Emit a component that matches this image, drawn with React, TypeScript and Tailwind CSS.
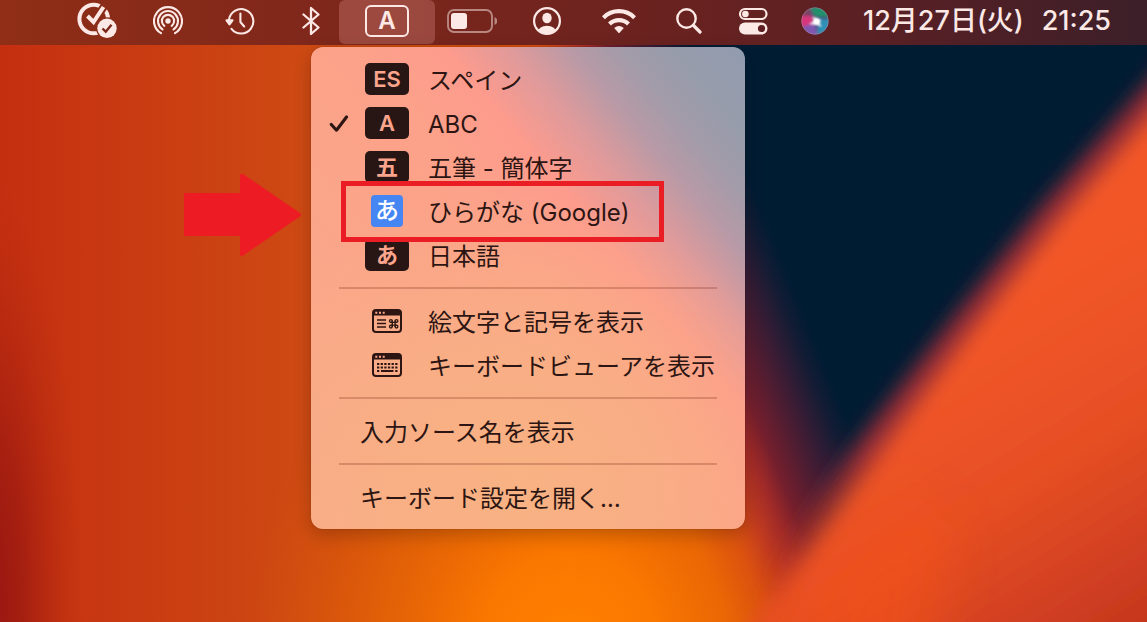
import type { ReactNode } from "react";

function Wallpaper() {
  return (
    <svg
      className="absolute inset-0 h-full w-full"
      viewBox="0 0 1147 622"
      preserveAspectRatio="none"
      aria-hidden="true"
    >
      <defs>
        <linearGradient id="base" x1="0" y1="0" x2="1" y2="0">
          <stop offset="0" stopColor="#c42f10" />
          <stop offset="0.12" stopColor="#c93b12" />
          <stop offset="0.27" stopColor="#ce4a13" />
          <stop offset="0.5" stopColor="#d65208" />
          <stop offset="0.7" stopColor="#dc5010" />
        </linearGradient>
        <radialGradient id="glow" cx="570" cy="640" r="330" gradientUnits="userSpaceOnUse">
          <stop offset="0" stopColor="#ff8000" />
          <stop offset="0.25" stopColor="#fb7800" />
          <stop offset="0.6" stopColor="#e56405" stopOpacity="0.75" />
          <stop offset="1" stopColor="#d65208" stopOpacity="0" />
        </radialGradient>
        <radialGradient
          id="shade"
          cx="0"
          cy="0"
          r="1"
          gradientUnits="userSpaceOnUse"
          gradientTransform="translate(-10 600) scale(90 420)"
        >
          <stop offset="0" stopColor="#961512" />
          <stop offset="0.4" stopColor="#a01c10" stopOpacity="0.8" />
          <stop offset="1" stopColor="#b52a10" stopOpacity="0" />
        </radialGradient>
        <linearGradient id="night" x1="640" y1="400" x2="812" y2="331" gradientUnits="userSpaceOnUse">
          <stop offset="0" stopColor="#dc5010" stopOpacity="0" />
          <stop offset="0.2" stopColor="#d64a14" stopOpacity="0.6" />
          <stop offset="0.34" stopColor="#c03a20" />
          <stop offset="0.45" stopColor="#a02a28" />
          <stop offset="0.55" stopColor="#741f2d" />
          <stop offset="0.67" stopColor="#541d31" />
          <stop offset="0.79" stopColor="#341c35" />
          <stop offset="0.91" stopColor="#121c34" />
          <stop offset="1" stopColor="#001c33" />
        </linearGradient>
        <linearGradient id="rim" x1="0" y1="460" x2="0" y2="590" gradientUnits="userSpaceOnUse">
          <stop offset="0" stopColor="#8f2a38" />
          <stop offset="1" stopColor="#d8481c" stopOpacity="0" />
        </linearGradient>
        <linearGradient id="wing" x1="960" y1="330" x2="1150" y2="640" gradientUnits="userSpaceOnUse">
          <stop offset="0" stopColor="#f25628" />
          <stop offset="0.45" stopColor="#e64f24" />
          <stop offset="1" stopColor="#c2341e" />
        </linearGradient>
        <filter id="soft" x="-30%" y="-30%" width="160%" height="160%">
          <feGaussianBlur stdDeviation="26" />
        </filter>
        <filter id="edge" x="-30%" y="-30%" width="160%" height="160%">
          <feGaussianBlur stdDeviation="10" />
        </filter>
      </defs>
      <rect width="1147" height="622" fill="url(#base)" />
      <rect width="1147" height="622" fill="url(#shade)" />
      <rect width="1147" height="622" fill="url(#glow)" />
      <rect width="1147" height="622" fill="url(#night)" />
      <path d="M1180 45 L1042 205 L947 325 L859 440 L796 532 L735 622 L700 680 L1240 700 L1240 30 Z" fill="url(#rim)" filter="url(#edge)" />
      <path d="M1202 55 L1062 215 L967 335 L880 450 L811 545 L755 622 L717 680 L1240 700 L1240 30 Z" fill="url(#wing)" filter="url(#edge)" />
      <path d="M820 590 L900 500 L950 540 L920 690 L790 690 Z" fill="#f65314" opacity="0.500" filter="url(#soft)" />
    </svg>
  );
}

function TaskCheckIcon() {
  return (
    <svg className="h-11 w-10" viewBox="77 0 40 44" fill="none" aria-hidden="true">
      <mask id="ringMask" maskUnits="userSpaceOnUse" x="70" y="0" width="50" height="44">
        <rect x="70" width="50" height="44" fill="#fff" />
        <path d="M93.500 23 L107 3" stroke="#000" strokeWidth="8" />
        <circle cx="107" cy="29.300" r="11" fill="#000" />
      </mask>
      <circle cx="93.700" cy="20" r="14.300" stroke="currentColor" strokeWidth="4" mask="url(#ringMask)" />
      <path d="M87.500 17 L93.500 23 L103.500 8" stroke="currentColor" strokeWidth="4" />
      <circle cx="107" cy="29.300" r="9.700" fill="currentColor" />
      <path d="M102.500 29.500 L105.700 32.700 L111.500 25.700" stroke="#7b2819" strokeWidth="2.400" />
    </svg>
  );
}

function AirDropIcon() {
  return (
    <svg className="size-[30px]" viewBox="-15 -15 30 30" fill="none" stroke="currentColor" strokeWidth="2.100" strokeLinecap="round" aria-hidden="true">
      <path d="M-7 12.200 A14 14 0 1 1 7 12.200" />
      <path d="M-5.500 8.400 A10 10 0 1 1 5.500 8.400" />
      <path d="M-3.700 4.800 A6.100 6.100 0 1 1 3.700 4.800" />
      <circle r="2.700" fill="currentColor" stroke="none" />
    </svg>
  );
}

function HistoryIcon() {
  return (
    <svg className="size-[30px]" viewBox="0 0 30 30" fill="none" stroke="currentColor" strokeWidth="2.100" strokeLinecap="round" strokeLinejoin="round" aria-hidden="true">
      <path d="M4 14 A12.200 12.200 0 1 1 6.500 22.800" />
      <path d="M1.500 14.300 H7.500 L4.500 18.500 Z" fill="currentColor" />
      <path d="M15.400 7.500 V16 L19.200 20.500" />
    </svg>
  );
}

function BluetoothIcon() {
  return (
    <svg className="h-[30px] w-[18px]" viewBox="0 0 18 30" fill="none" stroke="currentColor" strokeWidth="2.300" strokeLinecap="round" strokeLinejoin="round" aria-hidden="true">
      <path d="M1.500 8.500 L16.500 21.500 L9 28 V2 L16.500 8.500 L1.500 21.500" />
    </svg>
  );
}

function BatteryIcon() {
  return (
    <svg className="h-6 w-[50px]" viewBox="0 0 50 24" fill="none" aria-hidden="true">
      <rect x="1" y="1" width="44" height="22" rx="6" stroke="currentColor" strokeWidth="1.900" opacity="0.500" />
      <path d="M47.500 8 Q50.500 9.500 50.500 12 T47.500 16 Z" fill="currentColor" opacity="0.500" />
      <rect x="4" y="4" width="16" height="16" rx="3" fill="currentColor" />
    </svg>
  );
}

function UserIcon() {
  return (
    <svg className="size-7" viewBox="-14 -14 28 28" fill="none" aria-hidden="true">
      <clipPath id="userClip">
        <circle r="12.500" />
      </clipPath>
      <circle r="12.900" stroke="currentColor" strokeWidth="2.200" />
      <ellipse cy="-3" rx="4.700" ry="5.300" fill="currentColor" />
      <ellipse cy="12" rx="9.500" ry="7.300" fill="currentColor" clipPath="url(#userClip)" />
    </svg>
  );
}

function WifiIcon() {
  return (
    <svg className="h-[26px] w-[34px]" viewBox="-17 0 34 26" fill="none" stroke="currentColor" strokeWidth="4.200" aria-hidden="true">
      <path d="M-15.600 9.700 A22 22 0 0 1 15.600 9.700" />
      <path d="M-9.500 16 A13.500 13.500 0 0 1 9.500 16" />
      <path d="M-4.800 20 Q0 16.200 4.800 20 L0.600 24.800 Q0 25.400 -0.600 24.800 Z" fill="currentColor" stroke="none" />
    </svg>
  );
}

function SearchIcon() {
  return (
    <svg className="size-[26px]" viewBox="0 0 26 26" fill="none" stroke="currentColor" strokeLinecap="round" aria-hidden="true">
      <circle cx="10.500" cy="10.500" r="9.200" strokeWidth="2.400" />
      <path d="M17.500 17.500 L24 24" strokeWidth="3.200" />
    </svg>
  );
}

function ControlCenterIcon() {
  return (
    <svg className="h-7 w-[30px]" viewBox="0 0 30 28" fill="none" aria-hidden="true">
      <rect x="2" y="2" width="26.500" height="10" rx="5" stroke="currentColor" strokeWidth="2.200" />
      <circle cx="7.400" cy="7" r="3.300" fill="currentColor" />
      <rect x="1" y="15.500" width="28.500" height="12" rx="6" fill="currentColor" />
      <circle cx="23.500" cy="21.500" r="3.600" fill="#5e2022" />
    </svg>
  );
}

function SiriIcon() {
  return (
    <svg className="size-7" viewBox="0 0 28 28" aria-hidden="true">
      <defs>
        <clipPath id="orb">
          <circle cx="14" cy="14" r="13.500" />
        </clipPath>
        <filter id="orbBlur" x="-50%" y="-50%" width="200%" height="200%">
          <feGaussianBlur stdDeviation="1.800" />
        </filter>
        <filter id="orbCore" x="-50%" y="-50%" width="200%" height="200%">
          <feGaussianBlur stdDeviation="1.200" />
        </filter>
      </defs>
      <circle cx="14" cy="14" r="13.500" fill="#4a4a7c" />
      <g clipPath="url(#orb)">
        <g filter="url(#orbBlur)">
          <path d="M8 0 L28 0 L28 10 L14 10 Z" fill="#22906c" />
          <path d="M-2 8 L12 9 L13 20 L0 21 Z" fill="#d8357c" />
          <path d="M0 20 L14 16 L17 30 L6 28 Z" fill="#8058b0" />
          <path d="M18 12 L30 12 L28 24 L16 29 Z" fill="#2f90b5" />
          <path d="M3 2 L11 3 L9 9 L1 9 Z" fill="#7c4262" />
        </g>
        <path d="M11 10 L16 11 L20 13 L18.500 16 L21 20 L16 18 L8 17 L13 14 Z" fill="#fff" filter="url(#orbCore)" />
        <circle cx="15.500" cy="14.500" r="2.600" fill="#fff" filter="url(#orbCore)" />
      </g>
      <circle cx="14" cy="14" r="13.300" fill="none" stroke="#d79aa6" strokeOpacity="0.450" strokeWidth="0.800" />
    </svg>
  );
}

function WindowFrame({ children }: { children: ReactNode }) {
  return (
    <svg className="h-6 w-[30px]" viewBox="0 0 30 24" fill="none" stroke="currentColor" aria-hidden="true">
      <rect x="1" y="1" width="28" height="22" rx="3" strokeWidth="2" />
      <path d="M1 3 Q1 1 3 1 H27 Q29 1 29 3 V6.500 H1 Z" fill="currentColor" stroke="none" />
      <path d="M3.300 3.700 H5.300 M7 3.700 H9 M10.700 3.700 H12.700" stroke="#fba88a" strokeWidth="2" />
      {children}
    </svg>
  );
}

function PaletteIcon() {
  return (
    <WindowFrame>
      <path d="M5 11 H14 M5 14.500 H14 M5 18 H14" strokeWidth="1.600" />
      <g strokeWidth="1.300">
        <path d="M20.300 11.500 V18 M23.100 11.500 V18 M18.700 13.400 H24.700 M18.700 16.200 H24.700" />
        <circle cx="18.900" cy="12" r="1.400" />
        <circle cx="24.500" cy="12" r="1.400" />
        <circle cx="18.900" cy="17.600" r="1.400" />
        <circle cx="24.500" cy="17.600" r="1.400" />
      </g>
    </WindowFrame>
  );
}

function KeyboardViewerIcon() {
  return (
    <WindowFrame>
      <path d="M5 11 H25.500 M5 14.500 H25.500" strokeWidth="2.200" strokeDasharray="2.300 1.340" />
      <path d="M5 18 H7.300 M9 18 H21.500 M23.200 18 H25.500" strokeWidth="2.200" />
    </WindowFrame>
  );
}

function CheckMark() {
  return (
    <svg className="h-[18px] w-5" viewBox="0 0 20 18" fill="none" stroke="currentColor" strokeWidth="3.100" strokeLinecap="round" strokeLinejoin="round" aria-hidden="true">
      <path d="M2.300 10.500 L7.500 16.200 L17.500 3" />
    </svg>
  );
}

function StatusButton({ label, className, children }: { label: string; className: string; children: ReactNode }) {
  return (
    <button type="button" aria-label={label} className={`flex h-full shrink-0 items-center ${className}`}>
      {children}
    </button>
  );
}

function Badge({ children }: { children: ReactNode }) {
  return (
    <span className="flex h-8 w-11 items-center justify-center rounded-[5px] bg-[#271614] text-[22px] leading-8 font-semibold text-[#fca48c]">
      {children}
    </span>
  );
}

function SourceItem({
  icon,
  label,
  checked = false,
  highlighted = false,
}: {
  icon: ReactNode;
  label: string;
  checked?: boolean;
  highlighted?: boolean;
}) {
  return (
    <li className="relative">
      <button type="button" className="flex h-11 w-full items-center pl-[18px] text-left">
        <span className="mr-4 w-5">{checked && <CheckMark />}</span>
        <span className="mr-[19px] flex w-11 justify-center">{icon}</span>
        <span className="pt-[3px] whitespace-nowrap">{label}</span>
      </button>
      {highlighted && (
        <>
          <span className="pointer-events-none absolute -top-2 left-[30px] z-10 h-[61px] w-[323px] border-[5px] border-[#ea1c24]" />
          <svg
            className="pointer-events-none absolute -top-4 -left-[127px] h-[84px] w-[118px]"
            viewBox="0 0 118 84"
            aria-hidden="true"
          >
            <path d="M0 20 H56 V2 Q57 0 59 1 L116 40 Q118 42 116 43.500 L59 82.500 Q57 83.500 56 82 V63 H0 Z" fill="#ed1c24" />
          </svg>
        </>
      )}
    </li>
  );
}

function TextItem({ label }: { label: string }) {
  return (
    <li>
      <button type="button" className="flex h-11 w-full items-center pt-[3px] pl-[49px] text-left whitespace-nowrap">
        {label}
      </button>
    </li>
  );
}

function Separator() {
  return (
    <li role="separator" className="mx-7 flex h-[22px] items-center">
      <span className="h-[2px] w-full bg-[#8a3a28]/30" />
    </li>
  );
}

function InputMenu() {
  return (
    <ul className="absolute top-[47px] -left-7 w-[434px] rounded-xl bg-[radial-gradient(circle_at_48%_92%,#f8b283_0%,#f8b283b0_28%,#f8b28300_60%),linear-gradient(50deg,#f9ab8a_0%,#fba489_40%,#fca18a_54%,#fd9b8d_64%,#df9a9b_72%,#b89aa6_79%,#a39ba9_85%,#979cab_91%,#929caf_100%)] py-[10px] text-2xl text-[#2c1512] shadow-[0_0_1px_#00000080,0_6px_18px_#00000038]">
      <SourceItem icon={<Badge>ES</Badge>} label="スペイン" />
      <SourceItem icon={<Badge>A</Badge>} label="ABC" checked />
      <SourceItem icon={<Badge>五</Badge>} label="五筆 - 簡体字" />
      <SourceItem
        icon={
          <span className="flex size-8 items-center justify-center rounded-[4px] bg-[#4686f3] text-2xl leading-8 font-medium text-white">
            あ
          </span>
        }
        label="ひらがな (Google)"
        highlighted
      />
      <SourceItem icon={<Badge>あ</Badge>} label="日本語" />
      <Separator />
      <SourceItem icon={<PaletteIcon />} label="絵文字と記号を表示" />
      <SourceItem icon={<KeyboardViewerIcon />} label="キーボードビューアを表示" />
      <Separator />
      <TextItem label="入力ソース名を表示" />
      <Separator />
      <TextItem label="キーボード設定を開く…" />
    </ul>
  );
}

export default function App() {
  return (
    <div
      lang="ja"
      className="relative min-h-screen overflow-hidden font-['Inter','Noto_Sans_CJK_JP',sans-serif]"
    >
      <Wallpaper />
      <header className="relative flex h-[45px] items-start justify-end bg-[linear-gradient(90deg,#902e16_0%,#84291a_20%,#76251d_42%,#682220_60%,#5a2024_76%,#3c1f29_100%)] pr-9 text-[#fce9e6]">
        <div className="flex h-[42px] items-center">
          <StatusButton label="Tasks" className="mr-9">
            <TaskCheckIcon />
          </StatusButton>
          <StatusButton label="AirDrop" className="mr-[42px]">
            <AirDropIcon />
          </StatusButton>
          <StatusButton label="Time Machine" className="mr-[47px]">
            <HistoryIcon />
          </StatusButton>
          <StatusButton label="Bluetooth" className="mr-[19px]">
            <BluetoothIcon />
          </StatusButton>
        </div>
        <div className="relative z-10 mr-3">
          <button
            type="button"
            aria-label="Input source"
            aria-expanded="true"
            className="flex h-11 w-24 items-center justify-center rounded-md bg-[#ffb0a8]/25 pb-[2px]"
          >
            <span className="flex h-8 w-11 items-center justify-center rounded-md border-2 border-current text-2xl leading-7 font-semibold">
              A
            </span>
          </button>
          <InputMenu />
        </div>
        <div className="flex h-[42px] items-center">
          <StatusButton label="Battery" className="mr-9">
            <BatteryIcon />
          </StatusButton>
          <StatusButton label="User" className="mr-[41px]">
            <UserIcon />
          </StatusButton>
          <StatusButton label="Wi-Fi" className="mr-10">
            <WifiIcon />
          </StatusButton>
          <StatusButton label="Search" className="mr-9">
            <SearchIcon />
          </StatusButton>
          <StatusButton label="Control Center" className="mr-[33px]">
            <ControlCenterIcon />
          </StatusButton>
          <StatusButton label="Siri" className="mr-[34px]">
            <SiriIcon />
          </StatusButton>
          <time dateTime="12-27T21:25" className="flex w-[248px] justify-between text-[27px] leading-10 font-medium whitespace-nowrap">
            <span>12月27日(火)</span>
            <span>21:25</span>
          </time>
        </div>
      </header>
    </div>
  );
}
